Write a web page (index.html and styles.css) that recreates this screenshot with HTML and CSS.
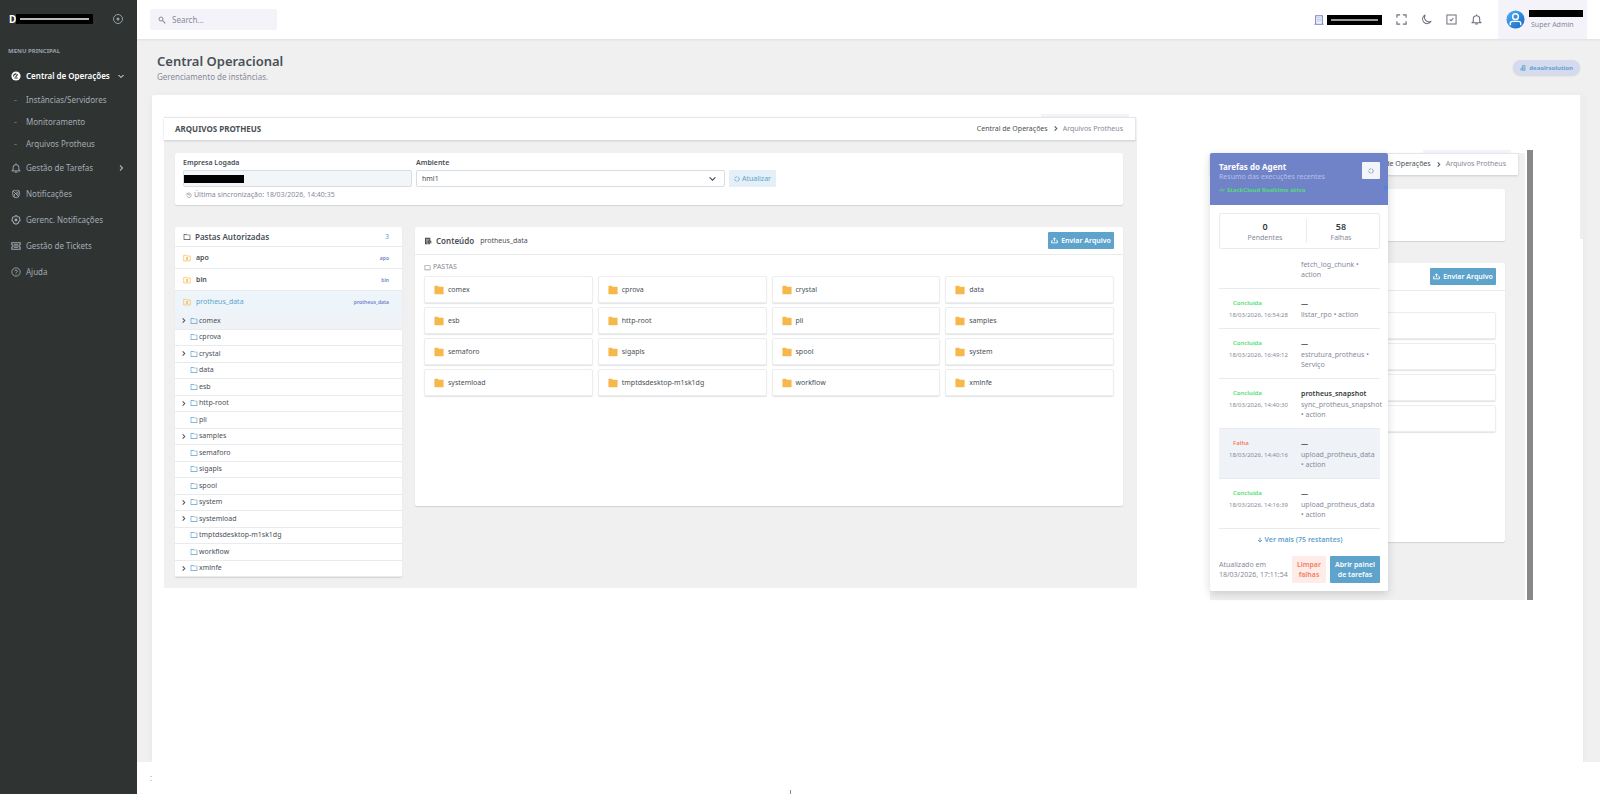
FILE: index.html
```html
<!DOCTYPE html>
<html lang="pt-BR">
<head>
<meta charset="utf-8">
<title>Central Operacional</title>
<link rel="stylesheet" href="styles.css">
</head>
<body>
<svg class="defs" aria-hidden="true">
  <symbol id="folder" viewBox="0 0 24 24"><path fill="currentColor" d="M4 5v14h16V7h-8.400l-2-2H4zm8.400 0H21a1 1 0 0 1 1 1v14a1 1 0 0 1-1 1H3a1 1 0 0 1-1-1V4a1 1 0 0 1 1-1h7.400l2 2z"/></symbol>
  <symbol id="folder-fill" viewBox="0 0 24 24"><path fill="currentColor" d="M11.400 4H22a1 1 0 0 1 1 1.500V21a1 1 0 0 1-1 1H2a1 1 0 0 1-1-1V3a1 1 0 0 1 1-1h7.400l2 2z"/></symbol>
  <symbol id="folder-up" viewBox="0 0 24 24"><path fill="none" stroke="currentColor" stroke-width="2" d="M2 4h7l3 2h10v15H2zM9 12l3-3 3 3-3 3zM12 9v9M8 17h8"/></symbol>
  <symbol id="chev-r" viewBox="0 0 12 12"><path fill="none" stroke="currentColor" stroke-width="2.500" d="M4 1l5 5-5 5"/></symbol>
  <symbol id="chev-d" viewBox="0 0 12 12"><path fill="none" stroke="currentColor" stroke-width="2" d="M1 4l5 5 5-5"/></symbol>
  <symbol id="bell" viewBox="0 0 24 24"><path fill="none" stroke="currentColor" stroke-width="2.300" stroke-linejoin="round" d="M12 1v3M5 17v-6q0-7 7-7t7 7v6l3 2H2zM9 22h6"/></symbol>
  <symbol id="ring" viewBox="0 0 24 24"><circle cx="12" cy="12" r="9" fill="none" stroke="currentColor" stroke-width="3" stroke-dasharray="11 3"/></symbol>
  <symbol id="upload" viewBox="0 0 24 24"><path fill="none" stroke="currentColor" stroke-width="3" d="M12 15V3M7 8l5-5 5 5M6 13H2v7h20v-7h-4"/></symbol>
</svg>

<div class="app">
  <aside class="sidebar">
    <div class="brand">
      <span class="brand-letter">D</span><span class="redact redact-brand"></span>
      <svg class="brand-toggle" viewBox="0 0 12 12"><circle cx="6" cy="6" r="4.500" fill="none" stroke="currentColor"/><circle cx="6" cy="6" r="1.500" fill="currentColor"/></svg>
    </div>
    <div class="menu-title">MENU PRINCIPAL</div>
    <nav class="menu">
      <a class="item active" href="#"><svg class="ic" viewBox="0 0 24 24"><circle cx="12" cy="12" r="11" fill="currentColor"/><path d="M11 14l5-6M6 13a6 6 0 0 1 7-6M8 17h8" fill="none" stroke="#2f3331" stroke-width="2.500"/></svg>Central de Operações<svg class="arrow"><use href="#chev-d"/></svg></a>
      <a class="sub" href="#">Instâncias/Servidores</a>
      <a class="sub" href="#">Monitoramento</a>
      <a class="sub" href="#">Arquivos Protheus</a>
      <a class="item" href="#"><svg class="ic"><use href="#bell"/></svg>Gestão de Tarefas<svg class="arrow"><use href="#chev-r"/></svg></a>
      <a class="item" href="#"><svg class="ic" viewBox="0 0 24 24"><path d="M4 5l4-2 4 2 4-2 4 2v8a8 8 0 0 1-16 0zM5 5l14 14M19 6L9 12M8 12v7M12 12h8" fill="none" stroke="currentColor" stroke-width="2"/></svg>Notificações</a>
      <a class="item" href="#"><svg class="ic" viewBox="0 0 24 24"><path d="M12 1l3 3 5 1 1 5 1 3-3 3-2 4-5 2-5-2-2-4-3-3 1-3 1-5 5-1z" fill="none" stroke="currentColor" stroke-width="2.500"/><circle cx="12" cy="12" r="3.500" fill="currentColor"/></svg>Gerenc. Notificações</a>
      <a class="item" href="#"><svg class="ic" viewBox="0 0 24 24"><path d="M2 4h20v5a3 3 0 0 0 0 6v5H2v-5a3 3 0 0 0 0-6z" fill="none" stroke="currentColor" stroke-width="2.500"/><path d="M7 8h10v3H7zM7 13h10v3H7z" fill="currentColor"/></svg>Gestão de Tickets</a>
      <a class="item" href="#"><svg class="ic" viewBox="0 0 24 24"><circle cx="12" cy="12" r="10" fill="none" stroke="currentColor" stroke-width="2"/><path d="M9 10a3 3 0 1 1 4 3l-1 1v1M12 16v2" fill="none" stroke="currentColor" stroke-width="2"/></svg>Ajuda</a>
    </nav>
  </aside>

  <div class="page">
    <header class="topbar">
      <label class="search"><svg viewBox="0 0 24 24"><circle cx="9" cy="9" r="6" fill="none" stroke="currentColor" stroke-width="3"/><path d="M14 14l8 8" stroke="currentColor" stroke-width="3.500"/></svg><input type="text" placeholder="Search..." aria-label="Search"></label>
      <div class="tools">
        <span class="company"><svg viewBox="0 0 24 24"><path d="M4 22V2h16v20M1 22h22" fill="none" stroke="currentColor" stroke-width="2.500"/><path d="M8 6h8v10H8zM12 6v10M8 11h8" fill="none" stroke="currentColor" stroke-width="1.500" opacity=".5"/></svg><span class="redact redact-company"></span></span>
        <button class="tool" aria-label="Tela cheia"><svg viewBox="0 0 24 24"><path d="M9 2H2v6M15 2h7v6M22 16v6h-7M9 22H2v-6" fill="none" stroke="currentColor" stroke-width="2.500"/></svg></button>
        <button class="tool" aria-label="Tema"><svg viewBox="0 0 24 24"><path d="M9 2a10 10 0 1 0 13 14A10 10 0 0 1 9 2z" fill="none" stroke="currentColor" stroke-width="2.200" stroke-linejoin="round"/></svg></button>
        <button class="tool" aria-label="Tarefas"><svg viewBox="0 0 24 24"><path d="M2 2h20v20H2zM8 12l3 3 5-6" fill="none" stroke="currentColor" stroke-width="2.200"/></svg></button>
        <button class="tool" aria-label="Avisos"><svg><use href="#bell"/></svg></button>
      </div>
      <div class="user">
        <svg class="avatar" viewBox="0 0 20 20"><defs><linearGradient id="av" x1="0" x2="1" y1="0" y2="1"><stop offset="0" stop-color="#53b1f5"/><stop offset="1" stop-color="#1565c0"/></linearGradient></defs><circle cx="10" cy="10" r="9.500" fill="url(#av)"/><circle cx="10" cy="7" r="3" fill="none" stroke="#fff" stroke-width="1.500"/><path d="M4.500 16v-2q0-2 2.500-2h6q2.500 0 2.500 2v2" fill="none" stroke="#fff" stroke-width="1.500"/></svg>
        <div class="user-info"><span class="redact redact-user"></span><span class="role">Super Admin</span></div>
      </div>
    </header>

    <div class="heading">
      <div><h1>Central Operacional</h1><p>Gerenciamento de instâncias.</p></div>
      <span class="pill"><svg viewBox="0 0 12 12"><path d="M5 1h5v9H5zM1 10h10M2 10V6h3M6 4h3M6 6h3" fill="none" stroke="currentColor" stroke-width="1.500"/></svg>deaolrsolution</span>
    </div>

    <main class="stage">
      <section class="pane files">
        <div class="pane-head">
          <h2>ARQUIVOS PROTHEUS</h2>
          <div class="crumbs"><a href="#">Central de Operações</a><svg><use href="#chev-r"/></svg><span>Arquivos Protheus</span></div>
        </div>
        <div class="pane-body">
          <form class="card filters">
            <div class="field company-field"><label for="empresa">Empresa Logada</label><div class="control"><input id="empresa" type="text" readonly><span class="redact redact-input"></span></div>
              <p class="sync"><svg viewBox="0 0 24 24"><path d="M4 3v6h6M4 9a9 9 0 1 1-1 5M12 8v5h4" fill="none" stroke="currentColor" stroke-width="2.500"/></svg>Última sincronização: 18/03/2026, 14:40:35</p></div>
            <div class="field env-field"><label for="ambiente">Ambiente</label><div class="control"><select id="ambiente"><option>hml1</option></select><svg class="select-arrow"><use href="#chev-d"/></svg></div></div>
            <button class="refresh" type="button"><svg><use href="#ring"/></svg>Atualizar</button>
          </form>
          <div class="columns">
            <section class="card folders">
              <header><svg><use href="#folder"/></svg><h3>Pastas Autorizadas</h3><span class="count">3</span></header>
              <a class="root" href="#"><svg><use href="#folder-up"/></svg>apo<small>apo</small></a>
              <a class="root" href="#"><svg><use href="#folder-up"/></svg>bin<small>bin</small></a>
              <a class="root selected" href="#"><svg><use href="#folder-up"/></svg>protheus_data<small>protheus_data</small></a>
              <ul class="tree">
                <li class="open"><svg class="tw"><use href="#chev-r"/></svg><svg class="fo"><use href="#folder"/></svg>comex</li>
                <li><svg class="tw"></svg><svg class="fo"><use href="#folder"/></svg>cprova</li>
                <li><svg class="tw"><use href="#chev-r"/></svg><svg class="fo"><use href="#folder"/></svg>crystal</li>
                <li><svg class="tw"></svg><svg class="fo"><use href="#folder"/></svg>data</li>
                <li><svg class="tw"></svg><svg class="fo"><use href="#folder"/></svg>esb</li>
                <li><svg class="tw"><use href="#chev-r"/></svg><svg class="fo"><use href="#folder"/></svg>http-root</li>
                <li><svg class="tw"></svg><svg class="fo"><use href="#folder"/></svg>pli</li>
                <li><svg class="tw"><use href="#chev-r"/></svg><svg class="fo"><use href="#folder"/></svg>samples</li>
                <li><svg class="tw"></svg><svg class="fo"><use href="#folder"/></svg>semaforo</li>
                <li><svg class="tw"></svg><svg class="fo"><use href="#folder"/></svg>sigapls</li>
                <li><svg class="tw"></svg><svg class="fo"><use href="#folder"/></svg>spool</li>
                <li><svg class="tw"><use href="#chev-r"/></svg><svg class="fo"><use href="#folder"/></svg>system</li>
                <li><svg class="tw"><use href="#chev-r"/></svg><svg class="fo"><use href="#folder"/></svg>systemload</li>
                <li><svg class="tw"></svg><svg class="fo"><use href="#folder"/></svg>tmptdsdesktop-m1sk1dg</li>
                <li><svg class="tw"></svg><svg class="fo"><use href="#folder"/></svg>workflow</li>
                <li><svg class="tw"><use href="#chev-r"/></svg><svg class="fo"><use href="#folder"/></svg>xmlnfe</li>
              </ul>
            </section>
            <section class="card content">
              <header><svg viewBox="0 0 24 24"><path d="M3 2h16v9h3v8h-4v3H3z" fill="currentColor"/><path d="M6 7h10M6 11h8M6 15h6M16 15h4M8 19h6" stroke="#fff" stroke-width="1.500"/></svg><h3>Conteúdo</h3><span class="path">protheus_data</span><button class="send"><svg><use href="#upload"/></svg>Enviar Arquivo</button></header>
              <div class="content-body">
                <h4><svg><use href="#folder"/></svg>PASTAS</h4>
                <div class="tiles">
                  <a href="#"><svg><use href="#folder-fill"/></svg>comex</a>
                  <a href="#"><svg><use href="#folder-fill"/></svg>cprova</a>
                  <a href="#"><svg><use href="#folder-fill"/></svg>crystal</a>
                  <a href="#"><svg><use href="#folder-fill"/></svg>data</a>
                  <a href="#"><svg><use href="#folder-fill"/></svg>esb</a>
                  <a href="#"><svg><use href="#folder-fill"/></svg>http-root</a>
                  <a href="#"><svg><use href="#folder-fill"/></svg>pli</a>
                  <a href="#"><svg><use href="#folder-fill"/></svg>samples</a>
                  <a href="#"><svg><use href="#folder-fill"/></svg>semaforo</a>
                  <a href="#"><svg><use href="#folder-fill"/></svg>sigapls</a>
                  <a href="#"><svg><use href="#folder-fill"/></svg>spool</a>
                  <a href="#"><svg><use href="#folder-fill"/></svg>system</a>
                  <a href="#"><svg><use href="#folder-fill"/></svg>systemload</a>
                  <a href="#"><svg><use href="#folder-fill"/></svg>tmptdsdesktop-m1sk1dg</a>
                  <a href="#"><svg><use href="#folder-fill"/></svg>workflow</a>
                  <a href="#"><svg><use href="#folder-fill"/></svg>xmlnfe</a>
                </div>
              </div>
            </section>
          </div>
        </div>
      </section>

      <section class="pane agent">
        <div class="back">
          <div class="pane-head">
            <div class="crumbs"><a href="#">de Operações</a><svg><use href="#chev-r"/></svg><span>Arquivos Protheus</span></div>
          </div>
          <div class="pane-body">
            <div class="card blank"></div>
            <div class="card content">
              <header><button class="send"><svg><use href="#upload"/></svg>Enviar Arquivo</button></header>
              <div class="content-body"><div class="tiles single"><i></i><i></i><i></i><i></i></div></div>
            </div>
          </div>
        </div>
        <div class="rail"></div>

        <aside class="tasks">
          <header>
            <div><h3>Tarefas do Agent</h3><p>Resumo das execuções recentes</p><p class="live"><svg viewBox="0 0 12 12"><path d="M0 7h3l2-4 2 6 2-4h3" fill="none" stroke="currentColor" stroke-width="1.500"/></svg>StackCloud Realtime ativo</p></div>
            <button aria-label="Atualizar tarefas"><svg><use href="#ring"/></svg></button>
          </header>
          <div class="tasks-body">
            <div class="stats"><div><b>0</b><span>Pendentes</span></div><div><b>58</b><span>Falhas</span></div></div>
            <ul class="log">
              <li class="cut"><div></div><div><span>fetch_log_chunk • action</span></div></li>
              <li><div><b class="ok">Concluída</b><span class="when">18/03/2026, 16:54:28</span></div><div><b>—</b><span>listar_rpo • action</span></div></li>
              <li><div><b class="ok">Concluída</b><span class="when">18/03/2026, 16:49:12</span></div><div><b>—</b><span>estrutura_protheus • Serviço</span></div></li>
              <li><div><b class="ok">Concluída</b><span class="when">18/03/2026, 14:40:30</span></div><div><b>protheus_snapshot</b><span>sync_protheus_snapshot • action</span></div></li>
              <li class="hot"><div><b class="fail">Falha</b><span class="when">18/03/2026, 14:40:16</span></div><div><b>—</b><span>upload_protheus_data • action</span></div></li>
              <li><div><b class="ok">Concluída</b><span class="when">18/03/2026, 14:16:39</span></div><div><b>—</b><span>upload_protheus_data • action</span></div></li>
            </ul>
            <a class="more-link" href="#"><svg viewBox="0 0 12 12"><path d="M6 1v9M2 6l4 4 4-4" fill="none" stroke="currentColor" stroke-width="2"/></svg>Ver mais (75 restantes)</a>
            <footer><span>Atualizado em<br>18/03/2026, 17:11:54</span><button class="clear">Limpar<br>falhas</button><button class="panel-btn">Abrir painel<br>de tarefas</button></footer>
          </div>
        </aside>
      </section>
      <div class="notch"></div>
    </main>
    <footer class="footer"><span>:</span><i></i></footer>
  </div>
</div>
</body>
</html>
```
FILE: styles.css
```css
* { box-sizing: border-box; }
body { margin: 0; background: #f0f0f0; color: #495057; font: 7px/10px "Noto Sans", "Open Sans", sans-serif; }
h1, h2, h3, h4, p, ul { margin: 0; padding: 0; list-style: none; }
h1, h2, h3, h4 { font-weight: 600; }
a { color: inherit; text-decoration: none; }
button, input, select { font: inherit; color: inherit; border: 0; margin: 0; padding: 0; background: none; }
svg { flex: none; display: block; }
.defs { position: absolute; width: 0; height: 0; }
.redact { display: block; background: #000; flex: none; }

.app { display: flex; min-height: 100vh; }
.sidebar { width: 137px; flex: none; background: #2f3331; color: #a3abb5; }
.page { flex: 1; min-width: 0; display: flex; flex-direction: column; }

.brand { display: flex; align-items: center; height: 38px; padding: 0 13px 0 9px; color: #fff; }
.brand-letter { font-size: 10px; font-weight: 700; width: 7px; }
.redact-brand { width: 77px; height: 10px; border: 4px solid #000; background: #bbb; }
.brand-toggle { width: 12px; height: 12px; margin-left: auto; color: #98a0a8; }
.menu-title { padding: 8px 8px 0; font-size: 6px; font-weight: 700; color: #98a0ab; }
.menu { display: flex; flex-direction: column; padding-top: 7px; font-size: 8px; }
.item { display: flex; align-items: center; height: 26px; padding-left: 11px; }
.item .ic { width: 10px; height: 10px; margin-right: 5px; }
.item.active { color: #fff; font-weight: 600; }
.arrow { width: 6px; height: 6px; margin: 0 13px 0 auto; }
.sub { height: 22px; line-height: 22px; padding-left: 14px; }
.sub::before { content: "–"; display: inline-block; width: 12px; font-size: 6px; vertical-align: top; }

.topbar { display: flex; height: 39px; background: #fff; padding: 0 13px; align-items: center; box-shadow: 0 1px 2px rgba(50, 60, 70, .1); }
.search { display: flex; align-items: center; width: 127px; height: 21px; padding: 0 8px; background: #f3f3f9; border-radius: 2px; color: #878a99; gap: 6px; }
.search svg { width: 8px; height: 8px; }
.search input { min-width: 0; flex: 1; font-size: 8px; }
.search input::placeholder { color: #878a99; opacity: 1; }
.tools { display: flex; margin-left: auto; align-items: center; gap: 14px; margin-right: 16px; color: #6d7080; }
.company { display: flex; gap: 3px; align-items: center; color: #7183c8; }
.company svg { width: 10px; height: 10px; }
.redact-company { width: 55px; height: 10px; border: 4px solid #000; background: #999; }
.tool svg { width: 11px; height: 11px; }
.user { width: 89px; height: 39px; background: #f3f3f9; display: flex; align-items: center; padding-left: 8px; gap: 4px; }
.avatar { width: 19px; height: 19px; }
.redact-user { width: 54px; height: 7px; }
.role { display: block; margin: 3px 0 0 2px; color: #878a99; }

.heading { display: flex; justify-content: space-between; padding: 13px 20px; }
.heading h1 { font-size: 13px; line-height: 19px; }
.heading p { font-size: 8px; line-height: 11px; color: #878a99; }
.pill { align-self: flex-start; margin-top: 8px; display: flex; align-items: center; gap: 3px; height: 15px; padding: 0 7px; border-radius: 8px; background: #d5daee; color: #5ea3cb; font-size: 6px; font-weight: 700; box-shadow: 0 1px 2px rgba(50, 60, 70, .15); }
.pill svg { width: 6px; height: 6px; }

.stage { position: relative; flex: 1; display: flex; align-items: flex-start; gap: 73px; margin: 0 17px 0 15px; padding: 22px 50px 0 12px; background: #fff; box-shadow: 0 1px 6px rgba(50, 60, 70, .06); border-radius: 2px 2px 0 0; }
.notch { position: absolute; right: 0; top: 0; width: 3px; height: 144px; background: #eee; }
.footer { position: relative; height: 32px; background: #fff; padding: 11px 13px; font-size: 8px; display: flex; color: #987; }
.footer i { position: absolute; left: 653px; bottom: 0; width: 1px; height: 4px; background: #888; }

.pane { position: relative; min-width: 0; }
.files { flex: 1; }
.files::before, .back::before { content: ""; position: absolute; right: 8px; top: -3px; width: 77px; height: 3px; background: #f3f3f9; }
.files::before { width: 88px; }
.pane-head { display: flex; align-items: center; justify-content: space-between; height: 23px; padding: 0 12px 1px 11px; margin-right: 1px; background: #fff; border: solid #e6e6e8; border-width: 1px 1px 0 0; box-shadow: 0 1px 2px rgba(50, 60, 70, .2); position: relative; }
.pane-head h2 { font-size: 8px; font-weight: 700; }
.crumbs { display: flex; align-items: center; gap: 5px; }
.crumbs svg { width: 5px; height: 5px; }
.crumbs span { color: #878a99; }
.pane-body { background: #f0f0f0; padding: 13px 14px 11px 11px; }
.card { background: #fff; border-radius: 2px; box-shadow: 0 1px 1px rgba(50, 60, 70, .16); }

.filters { display: flex; gap: 4px; padding: 5px 8px; height: 52px; margin-bottom: 22px; }
.field label { display: block; font-weight: 600; margin-bottom: 2px; }
.company-field { width: 229px; }
.env-field { width: 309px; }
.control { position: relative; }
.control input, .control select { display: block; width: 100%; height: 17px; border: 1px solid #d9dde3; border-radius: 2px; padding: 0 5px; appearance: none; background: #fff; }
.control input { background: #f3f6f9; }
.redact-input { position: absolute; left: 1px; top: 5px; width: 60px; height: 8px; }
.select-arrow { position: absolute; right: 9px; top: 5px; width: 7px; height: 7px; }
.sync { display: flex; align-items: center; gap: 2px; padding: 3px 3px 0; color: #878a99; }
.sync svg { width: 6px; height: 6px; }
.refresh { display: flex; align-items: center; justify-content: center; gap: 2px; width: 47px; height: 17px; margin-top: 12px; border-radius: 1px; background: #e5eff7; color: #5ea3cb; }
.refresh svg { width: 6px; height: 6px; }

.columns { display: grid; grid-template-columns: 227px 1fr; gap: 13px; align-items: start; }
.folders header { display: flex; align-items: center; gap: 4px; height: 20px; padding: 0 13px 0 8px; border-bottom: 1px solid #e9ebec; }
.folders header svg { width: 8px; height: 8px; }
.card h3 { font-size: 8px; }
.count { margin-left: auto; color: #5ea3cb; }
.root { display: flex; align-items: center; gap: 5px; height: 22px; padding: 0 13px 0 8px; border-bottom: 1px solid #e9ebec; font-weight: 600; }
.root svg { width: 8px; height: 8px; color: #f7b84b; }
.root small { margin-left: auto; font-size: 5px; color: #7183c8; }
.root.selected { border: 0; background: #edf5fa; color: #5ea3cb; font-weight: 400; }
.root.selected small { font-weight: 600; }
.tree { display: grid; grid-auto-rows: 1fr; min-height: 264px; }
.tree li { display: flex; align-items: center; border-bottom: 1px solid #e9ebec; padding-left: 6px; }
.tree li.open { background: #eff2f7; }
.tw { width: 5px; height: 5px; margin-right: 4px; }
.fo { width: 8px; height: 8px; margin-right: 1px; color: #5ea3cb; }

.content { min-height: 279px; }
.content header { display: flex; align-items: center; height: 28px; padding: 0 9px; border-bottom: 1px solid #e9ebec; }
.content header > svg { width: 8px; height: 8px; margin-right: 4px; }
.path { margin-left: 6px; }
.send { display: flex; align-items: center; justify-content: center; gap: 3px; height: 17px; width: 66px; margin-left: auto; border-radius: 1px; background: #5ea3cb; color: #fff; font-weight: 600; }
.send svg { width: 7px; height: 7px; }
.content-body { padding: 7px 9px; }
.content h4 { display: flex; align-items: center; gap: 2px; height: 10px; margin-bottom: 4px; color: #878a99; font-size: 7px; font-weight: 400; }
.content h4 svg { width: 7px; height: 7px; }
.tiles { display: grid; grid-template-columns: repeat(4, 1fr); gap: 4px 5px; }
.tiles a, .tiles i { display: flex; align-items: center; gap: 4px; height: 27px; padding-left: 9px; border: 1px solid #ebedee; border-radius: 2px; box-shadow: 0 1px 1px rgba(50, 60, 70, .14); }
.tiles svg { width: 10px; height: 10px; color: #f7b84b; }

.agent { width: 323px; flex: none; margin-top: 36px; display: flex; }
.back { position: relative; flex: 1; margin-right: 2px; background: #f0f0f0; }
.back .pane-head { height: 22px; margin-right: 7px; justify-content: flex-end; border-right: 0; }
.back .pane-body { padding: 14px 20px 58px 11px; }
.back .blank { height: 52px; margin-bottom: 22px; }
.back::before { right: 14px; width: 88px; }
.tiles.single { grid-template-columns: 1fr; padding-top: 14px; }
.rail { width: 6px; margin-top: -3px; background: #888; }
.tasks { position: absolute; left: 0; top: 0; width: 178px; background: #fff; border-radius: 2px; box-shadow: 0 3px 8px rgba(50, 60, 70, .2); color: #878a99; }
.tasks header { display: flex; justify-content: space-between; height: 52px; padding: 9px 8px 0 9px; border-radius: 2px 2px 0 0; background: radial-gradient(circle at 176px 35px, #5386d2 2px, transparent 3px), radial-gradient(circle at 22px 24px, #6189ce 2px, transparent 3px), #7183c8; color: #b5bfe6; }
.tasks h3 { font-size: 8px; font-weight: 700; color: #fff; }
.tasks header button { display: grid; place-items: center; width: 18px; height: 17px; background: #f3f6f9; border-radius: 1px; color: #7183c8; }
.tasks header button svg { width: 6px; height: 6px; }
.tasks .live { display: flex; align-items: center; gap: 2px; margin-top: 3px; color: #50dd72; font-size: 6px; font-weight: 700; }
.live svg { width: 6px; height: 6px; }
.tasks-body { padding: 8px 8px 8px 9px; }
.stats { display: grid; grid-template-columns: 82px 1fr; height: 36px; padding: 5px 4px; border: 1px solid #e9ebec; border-radius: 2px; text-align: center; }
.stats div + div { border-left: 1px solid #e9ebec; }
.stats div { padding-top: 2px; }
.stats b, .stats span, .log b, .log span { display: block; }
.stats b { color: #343a40; font-size: 9px; line-height: 12px; font-weight: 600; }
.log li { display: grid; grid-template-columns: 72px 1fr; padding: 8px 3px 8px 10px; border-bottom: 1px solid #e9ebec; }
.log li.cut { padding-top: 11px; }
.log b { color: #343a40; line-height: 13px; font-weight: 600; }
.log b.ok, .log b.fail { padding-left: 4px; font-size: 6px; }
.log b.ok { color: #50dd72; }
.log b.fail { color: #f77b61; }
.log .when { font-size: 6px; }
.log li.hot { background: #eff2f7; }
.more-link { display: flex; justify-content: center; align-items: center; gap: 2px; height: 21px; color: #5ea3cb; font-weight: 600; }
.more-link svg { width: 6px; height: 6px; }
.tasks footer { display: flex; align-items: center; gap: 4px; margin-top: 6px; }
.tasks footer span { flex: 1; white-space: nowrap; }
.tasks footer button { height: 27px; border-radius: 1px; font-weight: 600; }
.clear { width: 34px; background: #feece8; }
.panel-btn { width: 50px; background: #5ea3cb; }
.tasks footer .clear { color: #f77b61; background: #feece8; }
.tasks footer .panel-btn { color: #fff; background: #5ea3cb; }
```
